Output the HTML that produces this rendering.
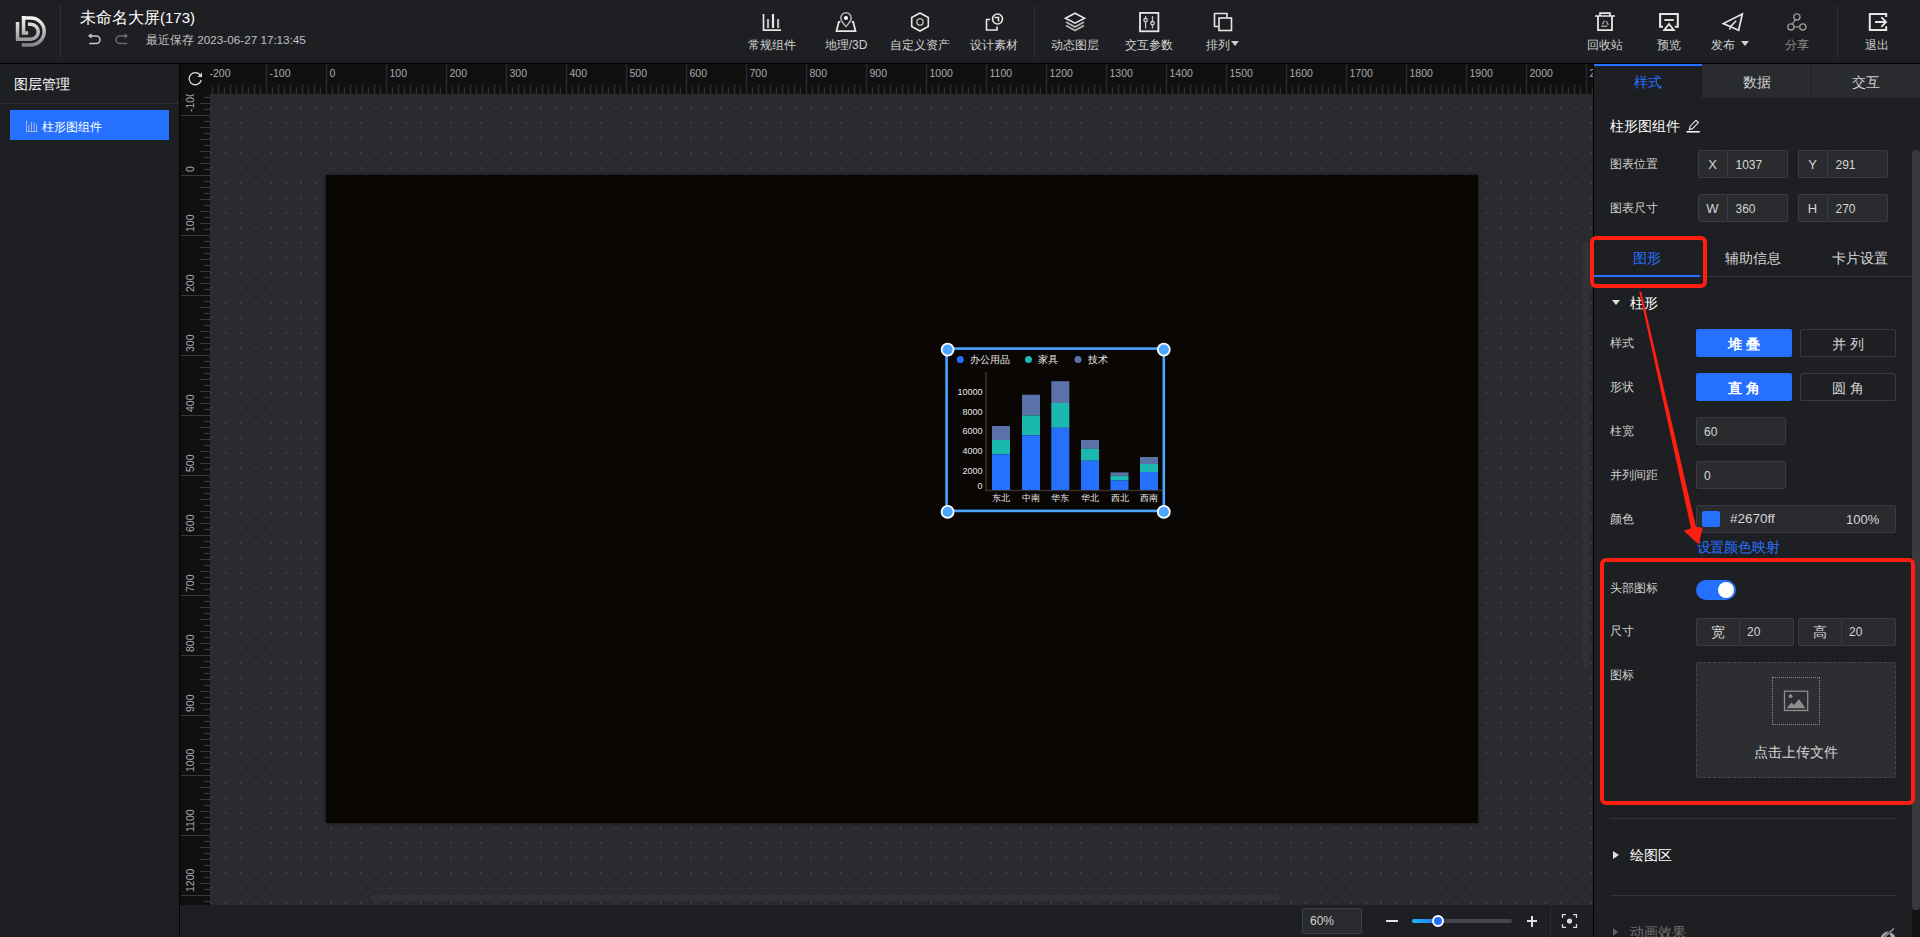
<!DOCTYPE html>
<html><head><meta charset="utf-8"><style>
*{margin:0;padding:0;box-sizing:content-box}
html,body{width:1920px;height:937px;overflow:hidden;background:#1e1f22;font-family:"Liberation Sans",sans-serif}
.t{position:absolute;white-space:nowrap;font-family:"Liberation Sans",sans-serif}
.c{text-align:center}
.cjk{font-family:"Liberation Sans",sans-serif}
</style></head><body>
<svg style="position:absolute;left:0;top:0" width="60" height="62" viewBox="0 0 60 62">
<defs><linearGradient id="lg" x1="0" y1="15" x2="0" y2="47" gradientUnits="userSpaceOnUse"><stop offset="0" stop-color="#ffffff"/><stop offset="1" stop-color="#7d7e80"/></linearGradient></defs>
<g fill="none" stroke="url(#lg)" stroke-width="3.5">
<path d="M22 17.9 H30.65 A13.55 13.55 0 0 1 30.65 45 H21.8"/>
<path d="M23.55 16 V33.1 H28.2"/>
<path d="M17.55 22 V39.3 H30.75 A7.5 7.5 0 0 0 30.75 24.25 H28"/>
</g></svg>
<div style="position:absolute;left:60px;top:5px;width:1px;height:53px;background:#303134"></div>
<div class="t" style="left:80px;top:7px;font-size:16px;color:#fff;line-height:22px">未命名大屏<span style="font-size:15px">(173)</span></div>
<svg style="position:absolute;left:84px;top:30px" width="50" height="18" viewBox="84 30 50 18">
<g fill="none" stroke-width="1.5" stroke-linecap="round">
<path d="M89.5 36 H96.2 A3.8 3.8 0 0 1 96.2 43.6 H89.8" stroke="#c8c8c8"/>
<path d="M126.5 36 H119.8 A3.8 3.8 0 0 0 119.8 43.6 H126.5" stroke="#6a6a6c"/>
</g>
<path d="M88 35.8 L91.5 33.2 V38.4 Z" fill="#c8c8c8"/>
<path d="M128 35.8 L124.5 33.2 V38.4 Z" fill="#6a6a6c"/>
</svg>
<div class="t" style="left:146px;top:32px;font-size:12px;color:#c0c0c0;line-height:16px">最近保存 <span style="font-size:11.7px">2023-06-27 17:13:45</span></div>
<svg style="position:absolute;left:0;top:0;overflow:visible" width="1" height="1"><g fill="none" stroke="#e6e6e6" stroke-width="1.6"><path d="M763.5 14 V30.2 H781" stroke-width="1.7"/><path d="M768 19 V28" stroke="#b8b8b8" stroke-width="2.2"/><path d="M773 14 V28" stroke-width="2.2"/><path d="M778.1 19 V28" stroke="#b8b8b8" stroke-width="2.2"/></g></svg>
<div class="t c" style="left:722px;width:100px;top:37px;font-size:12px;color:#cfcfcf;line-height:16px">常规组件</div>
<svg style="position:absolute;left:0;top:0;overflow:visible" width="1" height="1"><g fill="none" stroke="#e6e6e6" stroke-width="1.6"><path d="M840.3 21.8 H838.8 L836.5 31.2 H855.5 L853.2 21.8 H851.7" stroke-width="1.8"/><path d="M846 26.6 C843 23.2 840.8 20.6 840.8 17.9 A5.2 5.2 0 0 1 851.2 17.9 C851.2 20.6 849 23.2 846 26.6 Z" stroke="#b4b4b4" stroke-width="1.5"/><circle cx="846" cy="18" r="2.1" fill="#fff" stroke="none"/></g></svg>
<div class="t c" style="left:796px;width:100px;top:37px;font-size:12px;color:#cfcfcf;line-height:16px">地理/3D</div>
<svg style="position:absolute;left:0;top:0;overflow:visible" width="1" height="1"><g fill="none" stroke="#e6e6e6" stroke-width="1.6"><path d="M920 13 L928.3 17.5 V26.5 L920 31 L911.7 26.5 V17.5 Z"/><circle cx="920" cy="22" r="3.2" stroke="#a8a8a8" stroke-width="1.5"/></g></svg>
<div class="t c" style="left:870px;width:100px;top:37px;font-size:12px;color:#cfcfcf;line-height:16px">自定义资产</div>
<svg style="position:absolute;left:0;top:0;overflow:visible" width="1" height="1"><g fill="none" stroke="#e6e6e6" stroke-width="1.6"><path d="M990 19.5 H986.5 V30 H997 V26.5"/><circle cx="997.5" cy="19" r="5"/><path d="M994.5 17.5 H998.5 V21.5"/></g></svg>
<div class="t c" style="left:944px;width:100px;top:37px;font-size:12px;color:#cfcfcf;line-height:16px">设计素材</div>
<svg style="position:absolute;left:0;top:0;overflow:visible" width="1" height="1"><g fill="none" stroke="#e6e6e6" stroke-width="1.6"><path d="M1075 13.2 L1084.5 18.2 L1075 23.2 L1065.5 18.2 Z"/><path d="M1066 22 L1075 27 L1084 22" stroke="#b8b8b8"/><path d="M1066 25.5 L1075 30.5 L1084 25.5" stroke="#b8b8b8"/></g></svg>
<div class="t c" style="left:1025px;width:100px;top:37px;font-size:12px;color:#cfcfcf;line-height:16px">动态图层</div>
<svg style="position:absolute;left:0;top:0;overflow:visible" width="1" height="1"><g fill="none" stroke="#e6e6e6" stroke-width="1.6"><rect x="1140" y="12.9" width="18.4" height="18.4" stroke-width="1.8"/><path d="M1145.6 16 V28.5 M1152.5 16 V28.5" stroke="#c0c0c0" stroke-width="1.3"/><circle cx="1145.6" cy="20.2" r="1.7" fill="#1e1f22" stroke="#d0d0d0" stroke-width="1.3"/><circle cx="1152.5" cy="23.2" r="1.7" fill="#1e1f22" stroke="#d0d0d0" stroke-width="1.3"/></g></svg>
<div class="t c" style="left:1099px;width:100px;top:37px;font-size:12px;color:#cfcfcf;line-height:16px">交互参数</div>
<svg style="position:absolute;left:0;top:0;overflow:visible" width="1" height="1"><g fill="none" stroke="#e6e6e6" stroke-width="1.6"><path d="M1218.5 26.5 H1214.5 V13.5 H1227 V17"/><rect x="1219" y="18" width="12.5" height="12.5"/></g></svg>
<div class="t c" style="left:1172px;width:92px;top:37px;font-size:12px;color:#cfcfcf;line-height:16px">排列</div>
<div style="position:absolute;left:1231px;top:41px;width:0;height:0;border-left:4px solid transparent;border-right:4px solid transparent;border-top:5px solid #cfcfcf"></div>
<div style="position:absolute;left:1034px;top:5px;width:1px;height:52px;background:#303134"></div>
<svg style="position:absolute;left:0;top:0;overflow:visible" width="1" height="1"><g fill="none" stroke="#e6e6e6" stroke-width="1.6"><path d="M1595 16 H1615 M1600 15.5 V13.2 H1610 V15.5" stroke-width="1.7"/><path d="M1598 16 V30.2 H1612 V16" stroke-width="1.8"/><path d="M1602.3 24.3 L1604.6 20.6 M1606.3 21.2 L1608.3 25 M1607.3 26.3 H1601.3" stroke="#a0a0a0" stroke-width="1.4"/></g></svg>
<div class="t c" style="left:1555px;width:100px;top:37px;font-size:12px;color:#cfcfcf;line-height:16px">回收站</div>
<svg style="position:absolute;left:0;top:0;overflow:visible" width="1" height="1"><g fill="none" stroke="#e6e6e6" stroke-width="1.6"><path d="M1663 26.8 H1660.1 V14 H1677.8 V26.8 H1674.8" stroke-width="2.1"/><path d="M1664.3 20 H1673.8" stroke-width="2" stroke="#d8d8d8"/><path d="M1669 24 L1664.3 30 H1673.7 Z" stroke-width="1.9"/></g></svg>
<div class="t c" style="left:1619px;width:100px;top:37px;font-size:12px;color:#cfcfcf;line-height:16px">预览</div>
<svg style="position:absolute;left:0;top:0;overflow:visible" width="1" height="1"><g fill="none" stroke="#e6e6e6" stroke-width="1.6"><path d="M1742.3 14 L1723.3 23.6 L1729.6 26.2 L1738.6 30.2 Z" stroke-width="1.7" stroke-linejoin="miter"/><path d="M1736.2 20.8 L1730.6 26.4 L1729.7 29.6" stroke-width="1.5"/></g></svg>
<div class="t c" style="left:1673px;width:100px;top:37px;font-size:12px;color:#cfcfcf;line-height:16px">发布</div>
<div style="position:absolute;left:1741px;top:41px;width:0;height:0;border-left:4px solid transparent;border-right:4px solid transparent;border-top:5px solid #cfcfcf"></div>
<svg style="position:absolute;left:0;top:0;overflow:visible" width="1" height="1"><g fill="none" stroke="#9a9a9a" stroke-width="1.3"><circle cx="1796.9" cy="16.9" r="3.1"/><circle cx="1790.9" cy="26.9" r="3.1"/><circle cx="1802.8" cy="26.9" r="3.1"/><path d="M1795.2 19.6 L1792.4 24.2 M1794 26.9 H1799.7" stroke-width="1.2"/></g></svg>
<div class="t c" style="left:1747px;width:100px;top:37px;font-size:12px;color:#8c8c8c;line-height:16px">分享</div>
<svg style="position:absolute;left:0;top:0;overflow:visible" width="1" height="1"><g fill="none" stroke="#e6e6e6" stroke-width="1.6"><path d="M1886.2 17 V13.9 H1869.8 V30 H1886.2 V26.2" stroke-width="2"/><path d="M1875 22 H1886 M1881.3 17.2 L1886.1 22 L1881.3 26.8" stroke-width="1.8"/></g></svg>
<div class="t c" style="left:1827px;width:100px;top:37px;font-size:12px;color:#cfcfcf;line-height:16px">退出</div>
<div style="position:absolute;left:1837px;top:5px;width:1px;height:52px;background:#303134"></div>
<div style="position:absolute;left:0;top:63px;width:1920px;height:1px;background:#000"></div>
<div style="position:absolute;left:0;top:64px;width:179px;height:873px;background:#1e1f22"></div>
<div class="t" style="left:14px;top:74px;font-size:14px;color:#fff;line-height:20px">图层管理</div>
<div style="position:absolute;left:0;top:103px;width:179px;height:1px;background:#2e2f33"></div>
<div style="position:absolute;left:10px;top:110px;width:159px;height:30px;background:#2670ff"></div>
<svg style="position:absolute;left:0;top:0;overflow:visible" width="1" height="1"><g fill="none" stroke="#a9b6d0" stroke-width="1"><path d="M26.5 120.5 V131.5 H37.5"/><path d="M28.8 125 V131 M31.5 122 V131 M34.2 122.5 V131 M36.6 124.5 V131"/></g></svg>
<div class="t" style="left:42px;top:118.5px;font-size:12px;color:#fff;line-height:16px">柱形图组件</div>
<div style="position:absolute;left:179px;top:64px;width:1px;height:873px;background:#000"></div>
<div style="position:absolute;left:180px;top:64px;width:1413px;height:30px;background:#101011"></div>
<div style="position:absolute;left:180px;top:94px;width:30px;height:811px;background:#101011"></div>
<svg style="position:absolute;left:180px;top:64px" width="1413" height="30" viewBox="180 64 1413 30">
<path d="M206.5 64 V94 M266.5 64 V94 M326.5 64 V94 M386.5 64 V94 M446.5 64 V94 M506.5 64 V94 M566.5 64 V94 M626.5 64 V94 M686.5 64 V94 M746.5 64 V94 M806.5 64 V94 M866.5 64 V94 M926.5 64 V94 M986.5 64 V94 M1046.5 64 V94 M1106.5 64 V94 M1166.5 64 V94 M1226.5 64 V94 M1286.5 64 V94 M1346.5 64 V94 M1406.5 64 V94 M1466.5 64 V94 M1526.5 64 V94 M1586.5 64 V94" stroke="#28292c" stroke-width="1.5"/>
<path d="M212.5 87 V94 M224.5 87 V94 M236.5 87 V94 M248.5 87 V94 M260.5 87 V94 M272.5 87 V94 M284.5 87 V94 M296.5 87 V94 M308.5 87 V94 M320.5 87 V94 M332.5 87 V94 M344.5 87 V94 M356.5 87 V94 M368.5 87 V94 M380.5 87 V94 M392.5 87 V94 M404.5 87 V94 M416.5 87 V94 M428.5 87 V94 M440.5 87 V94 M452.5 87 V94 M464.5 87 V94 M476.5 87 V94 M488.5 87 V94 M500.5 87 V94 M512.5 87 V94 M524.5 87 V94 M536.5 87 V94 M548.5 87 V94 M560.5 87 V94 M572.5 87 V94 M584.5 87 V94 M596.5 87 V94 M608.5 87 V94 M620.5 87 V94 M632.5 87 V94 M644.5 87 V94 M656.5 87 V94 M668.5 87 V94 M680.5 87 V94 M692.5 87 V94 M704.5 87 V94 M716.5 87 V94 M728.5 87 V94 M740.5 87 V94 M752.5 87 V94 M764.5 87 V94 M776.5 87 V94 M788.5 87 V94 M800.5 87 V94 M812.5 87 V94 M824.5 87 V94 M836.5 87 V94 M848.5 87 V94 M860.5 87 V94 M872.5 87 V94 M884.5 87 V94 M896.5 87 V94 M908.5 87 V94 M920.5 87 V94 M932.5 87 V94 M944.5 87 V94 M956.5 87 V94 M968.5 87 V94 M980.5 87 V94 M992.5 87 V94 M1004.5 87 V94 M1016.5 87 V94 M1028.5 87 V94 M1040.5 87 V94 M1052.5 87 V94 M1064.5 87 V94 M1076.5 87 V94 M1088.5 87 V94 M1100.5 87 V94 M1112.5 87 V94 M1124.5 87 V94 M1136.5 87 V94 M1148.5 87 V94 M1160.5 87 V94 M1172.5 87 V94 M1184.5 87 V94 M1196.5 87 V94 M1208.5 87 V94 M1220.5 87 V94 M1232.5 87 V94 M1244.5 87 V94 M1256.5 87 V94 M1268.5 87 V94 M1280.5 87 V94 M1292.5 87 V94 M1304.5 87 V94 M1316.5 87 V94 M1328.5 87 V94 M1340.5 87 V94 M1352.5 87 V94 M1364.5 87 V94 M1376.5 87 V94 M1388.5 87 V94 M1400.5 87 V94 M1412.5 87 V94 M1424.5 87 V94 M1436.5 87 V94 M1448.5 87 V94 M1460.5 87 V94 M1472.5 87 V94 M1484.5 87 V94 M1496.5 87 V94 M1508.5 87 V94 M1520.5 87 V94 M1532.5 87 V94 M1544.5 87 V94 M1556.5 87 V94 M1568.5 87 V94 M1580.5 87 V94 M1592.5 87 V94 M218.5 84 V94 M230.5 84 V94 M242.5 84 V94 M254.5 84 V94 M278.5 84 V94 M290.5 84 V94 M302.5 84 V94 M314.5 84 V94 M338.5 84 V94 M350.5 84 V94 M362.5 84 V94 M374.5 84 V94 M398.5 84 V94 M410.5 84 V94 M422.5 84 V94 M434.5 84 V94 M458.5 84 V94 M470.5 84 V94 M482.5 84 V94 M494.5 84 V94 M518.5 84 V94 M530.5 84 V94 M542.5 84 V94 M554.5 84 V94 M578.5 84 V94 M590.5 84 V94 M602.5 84 V94 M614.5 84 V94 M638.5 84 V94 M650.5 84 V94 M662.5 84 V94 M674.5 84 V94 M698.5 84 V94 M710.5 84 V94 M722.5 84 V94 M734.5 84 V94 M758.5 84 V94 M770.5 84 V94 M782.5 84 V94 M794.5 84 V94 M818.5 84 V94 M830.5 84 V94 M842.5 84 V94 M854.5 84 V94 M878.5 84 V94 M890.5 84 V94 M902.5 84 V94 M914.5 84 V94 M938.5 84 V94 M950.5 84 V94 M962.5 84 V94 M974.5 84 V94 M998.5 84 V94 M1010.5 84 V94 M1022.5 84 V94 M1034.5 84 V94 M1058.5 84 V94 M1070.5 84 V94 M1082.5 84 V94 M1094.5 84 V94 M1118.5 84 V94 M1130.5 84 V94 M1142.5 84 V94 M1154.5 84 V94 M1178.5 84 V94 M1190.5 84 V94 M1202.5 84 V94 M1214.5 84 V94 M1238.5 84 V94 M1250.5 84 V94 M1262.5 84 V94 M1274.5 84 V94 M1298.5 84 V94 M1310.5 84 V94 M1322.5 84 V94 M1334.5 84 V94 M1358.5 84 V94 M1370.5 84 V94 M1382.5 84 V94 M1394.5 84 V94 M1418.5 84 V94 M1430.5 84 V94 M1442.5 84 V94 M1454.5 84 V94 M1478.5 84 V94 M1490.5 84 V94 M1502.5 84 V94 M1514.5 84 V94 M1538.5 84 V94 M1550.5 84 V94 M1562.5 84 V94 M1574.5 84 V94" stroke="#2c2d31" stroke-width="1.5"/>
<g fill="#a9aaad" font-size="10.5" font-family="Liberation Sans, sans-serif"><text x="209.5" y="77" >-200</text><text x="269.5" y="77" >-100</text><text x="329.5" y="77" >0</text><text x="389.5" y="77" >100</text><text x="449.5" y="77" >200</text><text x="509.5" y="77" >300</text><text x="569.5" y="77" >400</text><text x="629.5" y="77" >500</text><text x="689.5" y="77" >600</text><text x="749.5" y="77" >700</text><text x="809.5" y="77" >800</text><text x="869.5" y="77" >900</text><text x="929.5" y="77" >1000</text><text x="989.5" y="77" >1100</text><text x="1049.5" y="77" >1200</text><text x="1109.5" y="77" >1300</text><text x="1169.5" y="77" >1400</text><text x="1229.5" y="77" >1500</text><text x="1289.5" y="77" >1600</text><text x="1349.5" y="77" >1700</text><text x="1409.5" y="77" >1800</text><text x="1469.5" y="77" >1900</text><text x="1529.5" y="77" >2000</text><text x="1589.5" y="77" >2100</text></g>
</svg>
<svg style="position:absolute;left:180px;top:94px" width="30" height="811" viewBox="180 94 30 811">
<path d="M181 115.5 H210 M181 175.5 H210 M181 235.5 H210 M181 295.5 H210 M181 355.5 H210 M181 415.5 H210 M181 475.5 H210 M181 535.5 H210 M181 595.5 H210 M181 655.5 H210 M181 715.5 H210 M181 775.5 H210 M181 835.5 H210 M181 895.5 H210" stroke="#36373b" stroke-width="1.2"/>
<path d="M204 97.5 H210 M204 109.5 H210 M204 121.5 H210 M204 133.5 H210 M204 145.5 H210 M204 157.5 H210 M204 169.5 H210 M204 181.5 H210 M204 193.5 H210 M204 205.5 H210 M204 217.5 H210 M204 229.5 H210 M204 241.5 H210 M204 253.5 H210 M204 265.5 H210 M204 277.5 H210 M204 289.5 H210 M204 301.5 H210 M204 313.5 H210 M204 325.5 H210 M204 337.5 H210 M204 349.5 H210 M204 361.5 H210 M204 373.5 H210 M204 385.5 H210 M204 397.5 H210 M204 409.5 H210 M204 421.5 H210 M204 433.5 H210 M204 445.5 H210 M204 457.5 H210 M204 469.5 H210 M204 481.5 H210 M204 493.5 H210 M204 505.5 H210 M204 517.5 H210 M204 529.5 H210 M204 541.5 H210 M204 553.5 H210 M204 565.5 H210 M204 577.5 H210 M204 589.5 H210 M204 601.5 H210 M204 613.5 H210 M204 625.5 H210 M204 637.5 H210 M204 649.5 H210 M204 661.5 H210 M204 673.5 H210 M204 685.5 H210 M204 697.5 H210 M204 709.5 H210 M204 721.5 H210 M204 733.5 H210 M204 745.5 H210 M204 757.5 H210 M204 769.5 H210 M204 781.5 H210 M204 793.5 H210 M204 805.5 H210 M204 817.5 H210 M204 829.5 H210 M204 841.5 H210 M204 853.5 H210 M204 865.5 H210 M204 877.5 H210 M204 889.5 H210 M204 901.5 H210 M200 103.5 H210 M200 127.5 H210 M200 139.5 H210 M200 151.5 H210 M200 163.5 H210 M200 187.5 H210 M200 199.5 H210 M200 211.5 H210 M200 223.5 H210 M200 247.5 H210 M200 259.5 H210 M200 271.5 H210 M200 283.5 H210 M200 307.5 H210 M200 319.5 H210 M200 331.5 H210 M200 343.5 H210 M200 367.5 H210 M200 379.5 H210 M200 391.5 H210 M200 403.5 H210 M200 427.5 H210 M200 439.5 H210 M200 451.5 H210 M200 463.5 H210 M200 487.5 H210 M200 499.5 H210 M200 511.5 H210 M200 523.5 H210 M200 547.5 H210 M200 559.5 H210 M200 571.5 H210 M200 583.5 H210 M200 607.5 H210 M200 619.5 H210 M200 631.5 H210 M200 643.5 H210 M200 667.5 H210 M200 679.5 H210 M200 691.5 H210 M200 703.5 H210 M200 727.5 H210 M200 739.5 H210 M200 751.5 H210 M200 763.5 H210 M200 787.5 H210 M200 799.5 H210 M200 811.5 H210 M200 823.5 H210 M200 847.5 H210 M200 859.5 H210 M200 871.5 H210 M200 883.5 H210" stroke="#3a3b3f" stroke-width="1.2"/>
<g fill="#a9aaad" font-size="10.5" font-family="Liberation Sans, sans-serif"><text transform="translate(194 112.0) rotate(-90)">-100</text><text transform="translate(194 172.0) rotate(-90)">0</text><text transform="translate(194 232.0) rotate(-90)">100</text><text transform="translate(194 292.0) rotate(-90)">200</text><text transform="translate(194 352.0) rotate(-90)">300</text><text transform="translate(194 412.0) rotate(-90)">400</text><text transform="translate(194 472.0) rotate(-90)">500</text><text transform="translate(194 532.0) rotate(-90)">600</text><text transform="translate(194 592.0) rotate(-90)">700</text><text transform="translate(194 652.0) rotate(-90)">800</text><text transform="translate(194 712.0) rotate(-90)">900</text><text transform="translate(194 772.0) rotate(-90)">1000</text><text transform="translate(194 832.0) rotate(-90)">1100</text><text transform="translate(194 892.0) rotate(-90)">1200</text></g>
</svg>
<div style="position:absolute;left:180px;top:64px;width:30px;height:30px;background:#101011"></div>
<svg style="position:absolute;left:0;top:0;overflow:visible" width="1" height="1"><path d="M200.3 75.2 A6.1 6.1 0 1 0 201.2 80" fill="none" stroke="#d8d8d8" stroke-width="1.3"/><path d="M202 72.5 L202 77 L197.5 77 Z" fill="#d8d8d8"/></svg>
<svg style="position:absolute;left:210px;top:94px" width="1383" height="811" viewBox="210 94 1383 811">
<defs><pattern id="dots" x="210" y="107" width="15" height="15" patternUnits="userSpaceOnUse"><rect x="0" y="0" width="2" height="2" fill="#3c3d41"/></pattern></defs>
<rect x="210" y="94" width="1383" height="811" fill="#2a2b2f"/>
<rect x="210" y="94" width="1383" height="811" fill="url(#dots)"/>
</svg>
<div style="position:absolute;left:325.5px;top:175px;width:1152px;height:648px;background:#0a0604;box-shadow:0 0 3px rgba(0,0,0,0.6)"></div>
<div style="position:absolute;left:1583px;top:242px;width:6px;height:428px;background:#313236;border-radius:3px"></div>
<div style="position:absolute;left:371px;top:895px;width:909px;height:6px;background:#313236;border-radius:3px"></div>
<svg style="position:absolute;left:930px;top:330px" width="250" height="200" viewBox="930 330 250 200">
<path d="M986 372 V491 M986 490.5 H1163" stroke="#36312c" stroke-width="1.6" fill="none"/>
<rect x="992" y="426" width="18" height="14" fill="#5a72a8"/>
<rect x="992" y="440" width="18" height="14.300000000000011" fill="#1bb8b0"/>
<rect x="992" y="454.3" width="18" height="35.69999999999999" fill="#2670ff"/>
<rect x="1022" y="394.7" width="18" height="20.69999999999999" fill="#5a72a8"/>
<rect x="1022" y="415.4" width="18" height="19.900000000000034" fill="#1bb8b0"/>
<rect x="1022" y="435.3" width="18" height="54.69999999999999" fill="#2670ff"/>
<rect x="1051.3" y="381.2" width="18" height="21.80000000000001" fill="#5a72a8"/>
<rect x="1051.3" y="403" width="18" height="24.80000000000001" fill="#1bb8b0"/>
<rect x="1051.3" y="427.8" width="18" height="62.19999999999999" fill="#2670ff"/>
<rect x="1081" y="440" width="18" height="8.899999999999977" fill="#5a72a8"/>
<rect x="1081" y="448.9" width="18" height="11.800000000000011" fill="#1bb8b0"/>
<rect x="1081" y="460.7" width="18" height="29.30000000000001" fill="#2670ff"/>
<rect x="1110.5" y="472.4" width="18" height="3.400000000000034" fill="#5a72a8"/>
<rect x="1110.5" y="475.8" width="18" height="4.699999999999989" fill="#1bb8b0"/>
<rect x="1110.5" y="480.5" width="18" height="9.5" fill="#2670ff"/>
<rect x="1140" y="457" width="18" height="7" fill="#5a72a8"/>
<rect x="1140" y="464" width="18" height="8" fill="#1bb8b0"/>
<rect x="1140" y="472" width="18" height="18" fill="#2670ff"/>
<g fill="#e8e8e8" font-size="9" font-family="Liberation Sans, sans-serif" text-anchor="end">
<text x="982.5" y="395.2">10000</text>
<text x="982.5" y="415">8000</text>
<text x="982.5" y="434.3">6000</text>
<text x="982.5" y="454">4000</text>
<text x="982.5" y="474">2000</text>
<text x="982.5" y="488.5">0</text>
</g>
<g fill="#e8e8e8" font-size="9" text-anchor="middle" class="cjk">
<text x="1001" y="501.2">东北</text>
<text x="1031" y="501.2">中南</text>
<text x="1060.3" y="501.2">华东</text>
<text x="1090" y="501.2">华北</text>
<text x="1119.5" y="501.2">西北</text>
<text x="1149" y="501.2">西南</text>
</g>
<circle cx="960.3" cy="359.5" r="3.5" fill="#2670ff"/><circle cx="1028.5" cy="359.5" r="3.5" fill="#1bb8b0"/><circle cx="1078" cy="359.5" r="3.5" fill="#5a72a8"/>
<g fill="#ececec" font-size="10" class="cjk"><text x="969.5" y="362.7">办公用品</text><text x="1037.5" y="362.7">家具</text><text x="1087.5" y="362.7">技术</text></g>
<rect x="946.6" y="348.6" width="217.2" height="162.3" fill="none" stroke="#4aa6ff" stroke-width="2.6"/>
<circle cx="947.6" cy="349.6" r="6" fill="#4aa6ff" stroke="#fff" stroke-width="1.8"/>
<circle cx="1163.8" cy="349.6" r="6" fill="#4aa6ff" stroke="#fff" stroke-width="1.8"/>
<circle cx="947.6" cy="511.9" r="6" fill="#4aa6ff" stroke="#fff" stroke-width="1.8"/>
<circle cx="1163.8" cy="511.9" r="6" fill="#4aa6ff" stroke="#fff" stroke-width="1.8"/>
</svg>
<div style="position:absolute;left:180px;top:905px;width:1413px;height:32px;background:#1e1f22"></div>
<div style="position:absolute;left:1302px;top:908px;width:58px;height:24px;background:#2a2b2e;border:1px solid #3d3e42;border-radius:2px"></div>
<div class="t" style="left:1310px;top:913px;font-size:12px;color:#d0d0d0;line-height:16px">60%</div>
<div style="position:absolute;left:1386px;top:920px;width:12px;height:2px;background:#e0e0e0"></div>
<div style="position:absolute;left:1412px;top:919px;width:100px;height:4px;background:#45464b;border-radius:2px"></div>
<div style="position:absolute;left:1412px;top:919px;width:28px;height:4px;background:linear-gradient(90deg,#18b8fb,#2670ff);border-radius:2px"></div>
<div style="position:absolute;left:1432px;top:915px;width:8px;height:8px;background:#2670ff;border:2px solid #fff;border-radius:50%"></div>
<div style="position:absolute;left:1527px;top:920px;width:10px;height:2px;background:#e0e0e0"></div>
<div style="position:absolute;left:1531px;top:915.5px;width:2px;height:11px;background:#e0e0e0"></div>
<div style="position:absolute;left:1550px;top:905px;width:1px;height:32px;background:#2e2f33"></div>
<svg style="position:absolute;left:0;top:0;overflow:visible" width="1" height="1"><g fill="none" stroke="#d8d8d8" stroke-width="1.3"><path d="M1562.5 918 V914.7 H1566 M1573 914.7 H1576.5 V918 M1576.5 924 V927.3 H1573 M1566 927.3 H1562.5 V924"/></g><circle cx="1569.5" cy="921" r="2.6" fill="#d8d8d8"/></svg>
<div style="position:absolute;left:1593px;top:64px;width:1px;height:873px;background:#000"></div>
<div style="position:absolute;left:1594px;top:64px;width:326px;height:873px;background:#1e1f22"></div>
<div style="position:absolute;left:1702px;top:64px;width:218px;height:34px;background:#2a2b2e"></div>
<div style="position:absolute;left:1811px;top:64px;width:1px;height:34px;background:#1e1f22"></div>
<div style="position:absolute;left:1594px;top:64px;width:108px;height:2px;background:#2670ff"></div>
<div class="t c" style="left:1598.0px;width:100px;top:72.0px;font-size:14px;color:#2670ff;line-height:20px;">样式</div>
<div class="t c" style="left:1707.0px;width:100px;top:72.0px;font-size:14px;color:#cfcfcf;line-height:20px;">数据</div>
<div class="t c" style="left:1815.5px;width:100px;top:72.0px;font-size:14px;color:#cfcfcf;line-height:20px;">交互</div>
<div class="t" style="left:1610px;top:116.0px;font-size:14px;color:#ffffff;line-height:20px;">柱形图组件</div>
<svg style="position:absolute;left:0;top:0;overflow:visible" width="1" height="1"><g fill="none" stroke="#e0e0e0" stroke-width="1.2"><path d="M1689.3 129.6 L1690.1 126.2 L1696 120.3 L1698.4 122.6 L1692.5 128.6 Z"/><path d="M1686.5 131.8 H1699.7" stroke-width="1.6" stroke="#f4f4f4"/></g></svg>
<div class="t" style="left:1610px;top:155.0px;font-size:12px;color:#cfcfcf;line-height:18px;">图表位置</div>
<div style="position:absolute;left:1698px;top:150px;width:88px;height:26px;background:#2a2b2e;border:1px solid #3a3b3f;border-radius:2px"></div>
<div style="position:absolute;left:1727px;top:150px;width:1px;height:28px;background:#3a3b3f"></div>
<div class="t c" style="left:1697.5px;width:30px;top:154.5px;font-size:13px;color:#d6d6d6;line-height:19px;font-family:'Liberation Sans',sans-serif">X</div>
<div class="t" style="left:1735.5px;top:156.0px;font-size:12px;color:#d6d6d6;line-height:18px;">1037</div>
<div style="position:absolute;left:1798px;top:150px;width:88px;height:26px;background:#2a2b2e;border:1px solid #3a3b3f;border-radius:2px"></div>
<div style="position:absolute;left:1827px;top:150px;width:1px;height:28px;background:#3a3b3f"></div>
<div class="t c" style="left:1797.5px;width:30px;top:154.5px;font-size:13px;color:#d6d6d6;line-height:19px;">Y</div>
<div class="t" style="left:1835.5px;top:156.0px;font-size:12px;color:#d6d6d6;line-height:18px;">291</div>
<div class="t" style="left:1610px;top:199.0px;font-size:12px;color:#cfcfcf;line-height:18px;">图表尺寸</div>
<div style="position:absolute;left:1698px;top:194px;width:88px;height:26px;background:#2a2b2e;border:1px solid #3a3b3f;border-radius:2px"></div>
<div style="position:absolute;left:1727px;top:194px;width:1px;height:28px;background:#3a3b3f"></div>
<div class="t c" style="left:1697.5px;width:30px;top:198.5px;font-size:13px;color:#d6d6d6;line-height:19px;font-family:'Liberation Sans',sans-serif">W</div>
<div class="t" style="left:1735.5px;top:200.0px;font-size:12px;color:#d6d6d6;line-height:18px;">360</div>
<div style="position:absolute;left:1798px;top:194px;width:88px;height:26px;background:#2a2b2e;border:1px solid #3a3b3f;border-radius:2px"></div>
<div style="position:absolute;left:1827px;top:194px;width:1px;height:28px;background:#3a3b3f"></div>
<div class="t c" style="left:1797.5px;width:30px;top:198.5px;font-size:13px;color:#d6d6d6;line-height:19px;">H</div>
<div class="t" style="left:1835.5px;top:200.0px;font-size:12px;color:#d6d6d6;line-height:18px;">270</div>
<div style="position:absolute;left:1700px;top:276px;width:212px;height:1px;background:#333438"></div>
<div style="position:absolute;left:1594px;top:275px;width:106px;height:2px;background:#2670ff"></div>
<div class="t c" style="left:1597.0px;width:100px;top:247.5px;font-size:14px;color:#2670ff;line-height:20px;">图形</div>
<div class="t c" style="left:1703.0px;width:100px;top:247.5px;font-size:14px;color:#d6d6d6;line-height:20px;">辅助信息</div>
<div class="t c" style="left:1809.5px;width:100px;top:247.5px;font-size:14px;color:#d6d6d6;line-height:20px;">卡片设置</div>
<div style="position:absolute;left:1612px;top:300px;width:0;height:0;border-left:4px solid transparent;border-right:4px solid transparent;border-top:5.5px solid #e0e0e0"></div>
<div class="t" style="left:1630px;top:293.0px;font-size:14px;color:#ffffff;line-height:20px;">柱形</div>
<div class="t" style="left:1610px;top:334.0px;font-size:12px;color:#cfcfcf;line-height:18px;">样式</div>
<div style="position:absolute;left:1696px;top:329px;width:96px;height:28px;background:#2670ff;border-radius:2px"></div>
<div class="t c" style="left:1694.0px;width:100px;top:334.55px;font-size:13.5px;color:#ffffff;line-height:19.5px;font-weight:bold">堆 叠</div>
<div style="position:absolute;left:1800px;top:329px;width:94px;height:26px;background:transparent;border:1px solid #3a3b3f;border-radius:2px"></div>
<div class="t c" style="left:1798.0px;width:100px;top:334.55px;font-size:13.5px;color:#d6d6d6;line-height:19.5px;">并 列</div>
<div class="t" style="left:1610px;top:378.0px;font-size:12px;color:#cfcfcf;line-height:18px;">形状</div>
<div style="position:absolute;left:1696px;top:373px;width:96px;height:28px;background:#2670ff;border-radius:2px"></div>
<div class="t c" style="left:1694.0px;width:100px;top:378.55px;font-size:13.5px;color:#ffffff;line-height:19.5px;font-weight:bold">直 角</div>
<div style="position:absolute;left:1800px;top:373px;width:94px;height:26px;background:transparent;border:1px solid #3a3b3f;border-radius:2px"></div>
<div class="t c" style="left:1798.0px;width:100px;top:378.55px;font-size:13.5px;color:#d6d6d6;line-height:19.5px;">圆 角</div>
<div class="t" style="left:1610px;top:422.0px;font-size:12px;color:#cfcfcf;line-height:18px;">柱宽</div>
<div style="position:absolute;left:1696px;top:417px;width:88px;height:26px;background:#2a2b2e;border:1px solid #3a3b3f;border-radius:2px"></div>
<div class="t" style="left:1704px;top:422.7px;font-size:12px;color:#d6d6d6;line-height:18px;">60</div>
<div class="t" style="left:1610px;top:466.0px;font-size:12px;color:#cfcfcf;line-height:18px;">并列间距</div>
<div style="position:absolute;left:1696px;top:461px;width:88px;height:26px;background:#2a2b2e;border:1px solid #3a3b3f;border-radius:2px"></div>
<div class="t" style="left:1704px;top:466.7px;font-size:12px;color:#d6d6d6;line-height:18px;">0</div>
<div class="t" style="left:1610px;top:510.0px;font-size:12px;color:#cfcfcf;line-height:18px;">颜色</div>
<div style="position:absolute;left:1696px;top:505px;width:198px;height:26px;background:#2a2b2e;border:1px solid #3a3b3f;border-radius:2px"></div>
<div style="position:absolute;left:1702px;top:511px;width:18px;height:16px;background:#2670ff;border-radius:2px"></div>
<div class="t" style="left:1730px;top:509.25px;font-size:13.5px;color:#d6d6d6;line-height:19.5px;">#2670ff</div>
<div class="t" style="left:1846px;top:509.5px;font-size:13px;color:#d6d6d6;line-height:19px;">100%</div>
<div class="t" style="left:1696.5px;top:537.0px;font-size:14px;color:#2670ff;line-height:20px;letter-spacing:-0.2px">设置颜色映射</div>
<div class="t" style="left:1610px;top:579.0px;font-size:12px;color:#cfcfcf;line-height:18px;">头部图标</div>
<div style="position:absolute;left:1696px;top:580px;width:40px;height:20px;background:#2670ff;border-radius:10px"></div>
<div style="position:absolute;left:1718px;top:582px;width:16px;height:16px;background:#fff;border-radius:50%"></div>
<div class="t" style="left:1610px;top:622.0px;font-size:12px;color:#cfcfcf;line-height:18px;">尺寸</div>
<div style="position:absolute;left:1696px;top:618px;width:96px;height:26px;background:#2a2b2e;border:1px solid #3a3b3f;border-radius:2px"></div>
<div style="position:absolute;left:1739px;top:618px;width:1px;height:28px;background:#3a3b3f"></div>
<div class="t c" style="left:1697.5px;width:40px;top:622.0px;font-size:14px;color:#d6d6d6;line-height:20px;">宽</div>
<div class="t" style="left:1747px;top:623.0px;font-size:12px;color:#d6d6d6;line-height:18px;">20</div>
<div style="position:absolute;left:1798px;top:618px;width:96px;height:26px;background:#2a2b2e;border:1px solid #3a3b3f;border-radius:2px"></div>
<div style="position:absolute;left:1841px;top:618px;width:1px;height:28px;background:#3a3b3f"></div>
<div class="t c" style="left:1799.5px;width:40px;top:622.0px;font-size:14px;color:#d6d6d6;line-height:20px;">高</div>
<div class="t" style="left:1849px;top:623.0px;font-size:12px;color:#d6d6d6;line-height:18px;">20</div>
<div class="t" style="left:1610px;top:666.0px;font-size:12px;color:#cfcfcf;line-height:18px;">图标</div>
<div style="position:absolute;left:1696px;top:662px;width:198px;height:114px;background:#2d2e32;border:1px dashed #46474b;border-radius:2px"></div>
<div style="position:absolute;left:1772px;top:677px;width:46px;height:46px;border:1px dotted #8a8a8a"></div>
<svg style="position:absolute;left:0;top:0;overflow:visible" width="1" height="1"><rect x="1784.5" y="691.2" width="23.2" height="19.3" fill="none" stroke="#8d8d8d" stroke-width="1.3"/><circle cx="1790.6" cy="696.2" r="1.9" fill="#8d8d8d"/><path d="M1786.5 708.3 L1791.5 702.5 L1794 705 L1799 699 L1805.5 708.3 Z" fill="#8d8d8d"/></svg>
<div class="t c" style="left:1736.0px;width:120px;top:741.5px;font-size:14px;color:#d6d6d6;line-height:20px;">点击上传文件</div>
<div style="position:absolute;left:1610px;top:818px;width:286px;height:1px;background:#333438"></div>
<div style="position:absolute;left:1613px;top:851px;width:0;height:0;border-top:4px solid transparent;border-bottom:4px solid transparent;border-left:6px solid #e0e0e0"></div>
<div class="t" style="left:1630px;top:845.0px;font-size:14px;color:#ffffff;line-height:20px;">绘图区</div>
<div style="position:absolute;left:1610px;top:895px;width:286px;height:1px;background:#333438"></div>
<div style="position:absolute;left:1613px;top:928px;width:0;height:0;border-top:4px solid transparent;border-bottom:4px solid transparent;border-left:5.5px solid #626262"></div>
<div class="t" style="left:1630px;top:922.0px;font-size:14px;color:#707070;line-height:20px;">动画效果</div>
<svg style="position:absolute;left:0;top:0;overflow:visible" width="1" height="1"><path d="M1880.8 936.5 Q1888 926.5 1895.2 936.5 Q1888 946.5 1880.8 936.5 Z" fill="#a9a9a9"/><circle cx="1888" cy="936.5" r="2.6" fill="#1e1f22"/><path d="M1882.5 939.5 L1894.2 928.2" stroke="#1e1f22" stroke-width="2.4"/><path d="M1882.8 939.2 L1893.8 928.5" stroke="#a9a9a9" stroke-width="1.1"/></svg>
<div style="position:absolute;left:1912px;top:150px;width:8px;height:760px;background:#3a3a3c;border-radius:4px"></div>
<div style="position:absolute;left:1912px;top:910px;width:8px;height:27px;background:#141415"></div>
<div style="position:absolute;left:1590.3px;top:235.6px;width:108.4px;height:44.3px;border:4px solid #ff1e12;border-radius:6px"></div>
<div style="position:absolute;left:1599.5px;top:558.4px;width:307.3px;height:239.1px;border:4px solid #ff1e12;border-radius:6px"></div>
<svg style="position:absolute;left:0;top:0;overflow:visible" width="1" height="1"><path d="M1639.3 292 L1641.3 291.6 L1696 527 L1702.6 527.8 L1698.7 544.5 L1683.7 530.7 L1691 528.2 Z" fill="#ff1e12"/></svg>
</body></html>
